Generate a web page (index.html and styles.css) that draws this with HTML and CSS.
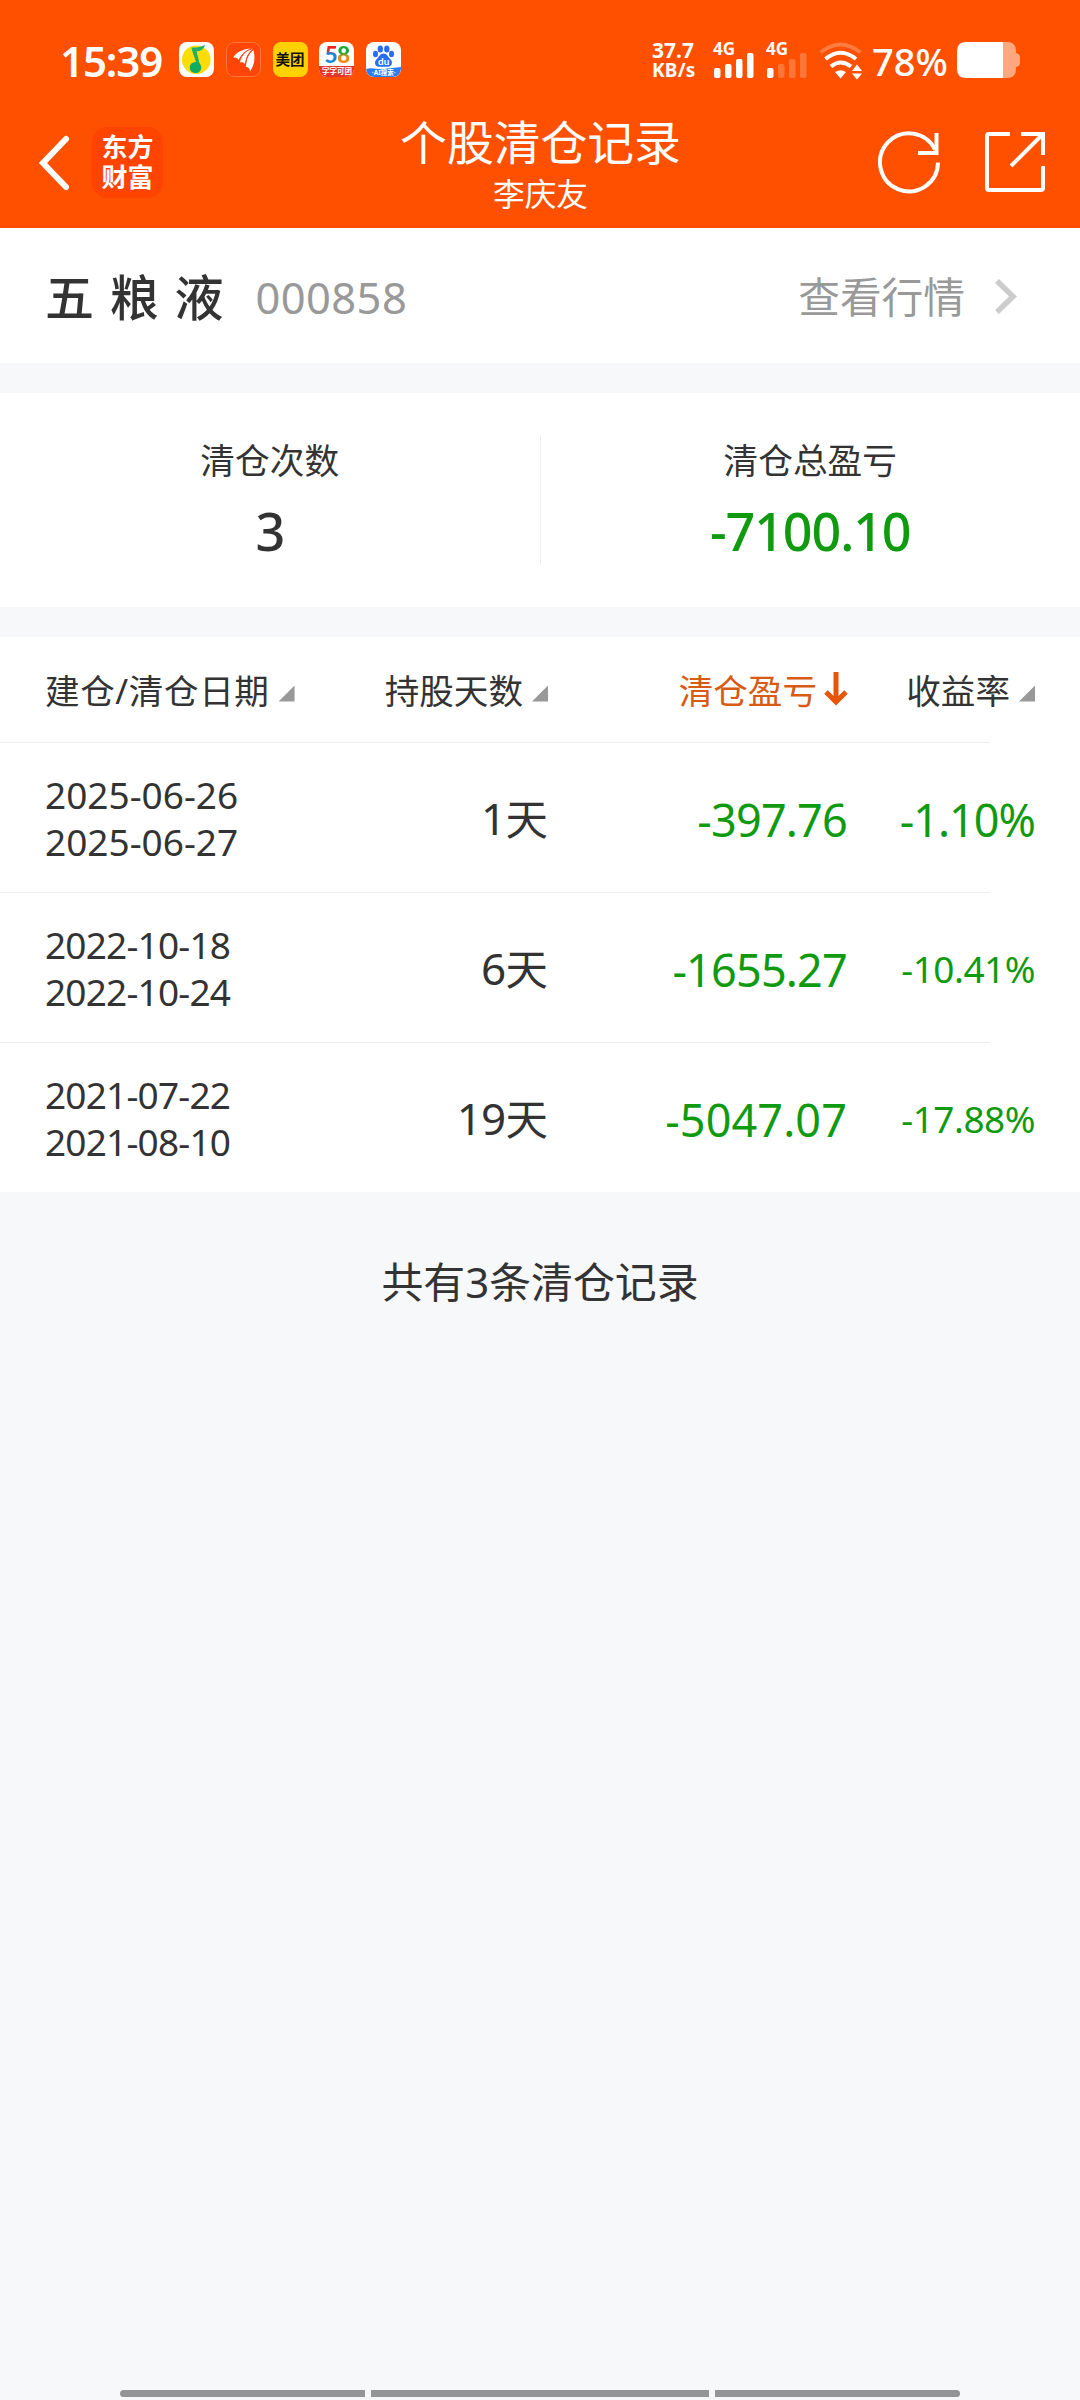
FILE: index.html
```html
<!DOCTYPE html>
<html lang="zh-CN">
<head>
<meta charset="utf-8">
<title>个股清仓记录</title>
<link rel="stylesheet" href="styles.css">
</head>
<body>
<header class="top">
  <div class="status">
    <span class="clock">15:39</span>
    <div class="apps">
      <svg width="35" height="35" viewBox="0 0 35 35"><rect width="35" height="35" rx="8" fill="#fff"/><circle cx="17.300" cy="17.700" r="14.300" fill="#fbdc05"/><path d="M12.500 5.500c4 .3 8 0 13.500-2.500-1.500 5-5 6-8.500 6.300l4 16-3-1-5.500-16z" fill="#18b06c"/><ellipse cx="16.500" cy="25.500" rx="5.800" ry="5.500" fill="#12ab62"/></svg>
      <svg width="35" height="35" viewBox="0 0 35 35"><rect x=".5" y=".5" width="34" height="34" rx="8" fill="#ff4508" stroke="#ff7440"/><g fill="#fff"><path d="M7 16C10 10 17 7 25 6.500 19 9 15 13 13 18c-1.500-2-4-3-6-2z"/><path d="M14 20.500C15 14 20 8.500 27 6.500c-5 4-7 9-8 15.500-1-1.500-3-2-5-1.500z"/><path d="M20 25c0-7 2-13 7.500-17 2 8 1 15-3.500 21.500 0-2.500-1.500-4.500-4-4.500z"/></g><path d="M13 18.500C15 13 19 9 25 7M19.500 23C20 16 23 11 27 8" fill="none" stroke="#ff4508" stroke-width="1"/></svg>
      <span class="meituan">美团</span>
      <div class="app58"><b class="num58"><i class="red">5</i><i class="green">8</i></b><span class="strip58">字字可团</span></div>
      <div class="baidu">
        <svg width="35" height="35" viewBox="0 0 35 35"><g fill="#2a6cf0"><ellipse cx="9.500" cy="12" rx="2.500" ry="3.300"/><ellipse cx="14.300" cy="7" rx="2.700" ry="3.500"/><ellipse cx="20.800" cy="7" rx="2.700" ry="3.500"/><ellipse cx="25.500" cy="12" rx="2.500" ry="3.300"/><path d="M17.500 11.500c3.500 0 4.500 3.500 6.500 5.300 3.500 3 2 8-2 8h-9c-4 0-5.500-5-2-8 2-1.800 3-5.300 6.500-5.300z"/></g><path d="M0 27c6-2 12 1 17.500 0S29 26 35 25v2a8 8 0 0 1-8 8H8a8 8 0 0 1-8-8z" fill="#2a7cf3"/></svg>
        <span class="du">du</span><span class="strip">·AI搜索·</span>
      </div>
    </div>
    <div class="speed"><span>37.7</span><span class="unit">KB/s</span></div>
    <div class="signal"><span>4G</span><svg width="40" height="25" viewBox="0 0 40 25" fill="#fff"><rect y="15" width="6.500" height="10" rx="2"/><rect x="11" y="11" width="6.500" height="14" rx="2"/><rect x="22" y="6" width="6.500" height="19" rx="2"/><rect x="33" width="6.500" height="25" rx="2"/></svg></div>
    <div class="signal"><span>4G</span><svg width="40" height="25" viewBox="0 0 40 25" fill="#fff"><rect y="15" width="6.500" height="10" rx="2"/><g opacity=".22"><rect x="11" y="11" width="6.500" height="14" rx="2"/><rect x="22" y="6" width="6.500" height="19" rx="2"/><rect x="33" width="6.500" height="25" rx="2"/></g></svg></div>
    <svg class="wifi" width="44" height="38" viewBox="0 0 44 38"><g fill="none" stroke="#fff" stroke-width="4"><path d="M1.500 10.500Q21.500-5.500 41.500 10.500" opacity=".25"/><path d="M6.500 17Q21.500 4.500 37 17"/><path d="M12 24.500Q21.500 16.500 32 24.500"/></g><path d="M16 30q5.500-3.500 11 0l-5.500 6.500zM38 22.500l5 6.500H33zM38 37.500l5-6H33z" fill="#fff"/></svg>
    <span class="percent">78%</span>
    <svg class="battery" width="63" height="36" viewBox="0 0 63 36"><path d="M46 0h4q9 0 9 9v2q4 1 4 4v6q0 3-4 4v2q0 9-9 9h-4z" fill="#fff" opacity=".5"/><path d="M46 0H9Q0 0 0 9v18q0 9 9 9h37z" fill="#fff"/></svg>
  </div>
  <div class="bar">
    <div class="side">
      <svg class="back" width="32" height="56" viewBox="0 0 32 56"><path d="M28 4L5 28l23 24" fill="none" stroke="#fff" stroke-width="6" stroke-linecap="round"/></svg>
      <div class="brand"><span>东方</span><span>财富</span></div>
    </div>
    <div class="heading"><h1>个股清仓记录</h1><p>李庆友</p></div>
    <div class="side tools">
      <svg width="64" height="64" viewBox="0 0 64 64" fill="none" stroke="#fff" stroke-width="4"><path d="M61 32.500A29 29 0 1 1 58 19.500"/><path d="M59.500 3v20H41"/></svg>
      <svg width="60" height="60" viewBox="0 0 60 60" fill="none" stroke="#fff" stroke-width="4"><path d="M25 2H4Q2 2 2 4v52q0 2 2 2h52q2 0 2-2V34"/><path d="M36 2h22v21M58 2L26 34"/></svg>
    </div>
  </div>
</header>

<section class="stock">
  <h2>五 粮 液</h2><span class="code">000858</span>
  <a class="quote">查看行情<svg width="24" height="36" viewBox="0 0 24 36"><path d="M2 3l16 15.500L2 34" fill="none" stroke="#ccc" stroke-width="5.500"/></svg></a>
</section>

<section class="stats">
  <div class="stat"><span>清仓次数</span><strong>3</strong></div>
  <div class="stat"><span>清仓总盈亏</span><strong class="loss">-7100.10</strong></div>
</section>

<section class="records">
  <div class="row head">
    <span class="period">建仓/清仓日期<i class="sort"></i></span>
    <span>持股天数<i class="sort"></i></span>
    <span class="active">清仓盈亏<svg width="24" height="34" viewBox="0 0 24 34"><path d="M12 0v31M2 20l10 10 10-10" fill="none" stroke="#e8540a" stroke-width="5"/></svg></span>
    <span>收益率<i class="sort"></i></span>
  </div>
  <div class="row">
    <div class="dates"><span>2025-06-26</span><span>2025-06-27</span></div>
    <div class="days"><b>1</b>天</div><div class="profit">-397.76</div><div class="rate large">-1.10%</div>
  </div>
  <div class="row">
    <div class="dates tight"><span>2022-10-18</span><span>2022-10-24</span></div>
    <div class="days"><b>6</b>天</div><div class="profit">-1655.27</div><div class="rate">-10.41%</div>
  </div>
  <div class="row">
    <div class="dates tight"><span>2021-07-22</span><span>2021-08-10</span></div>
    <div class="days"><b>19</b>天</div><div class="profit wide">-5047.07</div><div class="rate">-17.88%</div>
  </div>
</section>
<p class="total">共有3条清仓记录</p>
<footer class="nav"><i></i><i></i><i></i></footer>
</body>
</html>
```
FILE: styles.css
```css
* { box-sizing: border-box; margin: 0; padding: 0; }
body {
  width: 1080px; height: 2400px; display: flex; flex-direction: column;
  background: #f7f8fa; color: #333;
  font-family: "Noto Sans", "Noto Sans CJK SC", sans-serif;
}
i, b { font-style: normal; font-weight: inherit; }
svg { display: block; flex: none; }

.top { height: 228px; background: #ff5000; color: #fff; }
.status { height: 98px; padding: 42px 60px 0 60px; display: flex; align-items: flex-start; white-space: nowrap; }
.clock { width: 119px; font-size: 42px; line-height: 37px; font-weight: 600; letter-spacing: -1.1px; }
.apps { display: flex; gap: 11.800px; width: 473px; }
.meituan { width: 35px; height: 35px; border-radius: 8px; background: #ffd100; color: #111; font-size: 14.500px; font-weight: 700; line-height: 35px; text-align: center; }
.app58 { width: 35px; height: 35px; border-radius: 8px; background: #fff; overflow: hidden; text-align: center; }
.num58 { display: block; height: 24px; font: 900 23px/24px Lato, sans-serif; letter-spacing: -1px; }
.red { color: transparent; background: linear-gradient(#e22 35%, #1689d8 50%); background-clip: text; }
.green { color: transparent; background: linear-gradient(#19aa38 45%, #f08a16 60%); background-clip: text; }
.strip58 { display: block; height: 11px; background: #e3352c; color: #fff; font-size: 7.500px; line-height: 11px; font-weight: 700; }
.baidu { position: relative; width: 35px; height: 35px; border-radius: 8px; background: #fff; overflow: hidden; color: #fff; text-align: center; }
.du { position: absolute; inset: 13px 0 auto; font: 700 10px/12px Lato, sans-serif; }
.strip { position: absolute; inset: 26px 0 auto; font-size: 6.500px; line-height: 9px; font-weight: 700; }
.speed { width: 61px; display: flex; flex-direction: column; font-size: 21px; line-height: 16px; font-weight: 700; letter-spacing: 0; }
.speed .unit { font-size: 19px; line-height: 24px; letter-spacing: .2px; }
.signal { width: 53px; font-size: 17px; line-height: 13px; font-weight: 700; }
.signal svg { margin: -2px 0 0 1px; }
.percent { margin-left: 9px; width: 85px; font-size: 38px; line-height: 38px; font-weight: 500; }
.bar { height: 130px; display: flex; justify-content: space-between; padding: 0 35px 0 38px; }
.side { width: 320px; display: flex; align-items: flex-start; }
.back { margin: 37px 22px 0 0; }
.brand { width: 71px; height: 71px; margin-top: 29px; padding-top: 5px; border-radius: 15px; background: #ff4400; display: flex; flex-direction: column; align-items: center; font-size: 26px; line-height: 30px; font-weight: 700; }
.heading { text-align: center; }
.heading h1 { margin: 10px 2px 0 0; font-size: 46.800px; line-height: 68px; font-weight: 400; }
.heading p { margin-right: 2px; font-size: 31.700px; line-height: 36px; }
.tools { justify-content: flex-end; gap: 44px; padding-top: 34px; }
.tools svg:first-child { margin-top: -2px; }

.stock { height: 135px; padding: 3px 61px 0 45px; background: #fff; display: flex; align-items: center; }
.stock h2 { font-size: 49px; font-weight: 500; word-spacing: 3px; line-height: 60px; }
.code { margin-left: 32px; color: #999; font-size: 43.500px; line-height: 60px; letter-spacing: .4px; }
.quote { margin-left: auto; display: flex; align-items: center; gap: 30px; color: #999; font-size: 41.700px; line-height: 60px; }
.quote svg { margin-top: -3px; }

.stats { margin: 30px 0; height: 214px; padding-top: 43px; background: #fff; display: flex; }
.stat { flex: 1; height: 128px; display: flex; flex-direction: column; align-items: center; }
.stat + .stat { border-left: 1px solid #eee; }
.stat span { font-size: 34.700px; line-height: 50px; }
.stat strong { margin-top: 9px; font-size: 52px; line-height: 72px; font-weight: 500; letter-spacing: -1.1px; }
.stat .loss, .profit, .rate { color: #109a10; }

.row { height: 150px; padding: 3px 0 0 45px; display: grid; grid-template-columns: 255px 248px 299px 188px; align-items: center; background: linear-gradient(#eee, #eee) left bottom / 990px 1px no-repeat #fff; white-space: nowrap; }
.row:last-child { height: 149px; background: #fff; }
.row > * + * { justify-self: end; }
.head { height: 106px; padding-top: 2px; font-size: 34.600px; line-height: 50px; }
.head span { display: flex; align-items: center; }
.head .period { letter-spacing: .6px; }
.sort { width: 16px; height: 16px; margin: 5px 0 0 9px; background: #999; clip-path: polygon(100% 0, 100% 100%, 0 100%); }
.active { color: #d85a14; }
.head .active { margin-right: -1px; }
.active svg { margin: -4px 0 0 7px; }
.dates { margin-top: -3px; display: flex; flex-direction: column; font-size: 37px; line-height: 47px; }
.tight { letter-spacing: -.8px; }
.days { margin-top: -2px; font-size: 42.500px; line-height: 60px; }
.days b { font-size: 44px; letter-spacing: -.8px; }
.profit { font-size: 45px; letter-spacing: -.8px; }
.profit.wide { letter-spacing: .1px; }
.rate { margin-top: -2px; font-size: 37px; letter-spacing: -.5px; }
.rate.large { margin-top: 0; font-size: 45px; letter-spacing: -1px; }

.total { margin-top: 60px; font-size: 41.900px; line-height: 60px; text-align: center; }
.nav { margin-top: auto; height: 10px; display: flex; justify-content: center; gap: 6px; }
.nav i { width: 245px; height: 7px; background: #949494; }
.nav i:nth-child(2) { width: 338px; }
.nav i:first-child { border-radius: 4px 0 0 4px; }
.nav i:last-child { border-radius: 0 4px 4px 0; }
```
